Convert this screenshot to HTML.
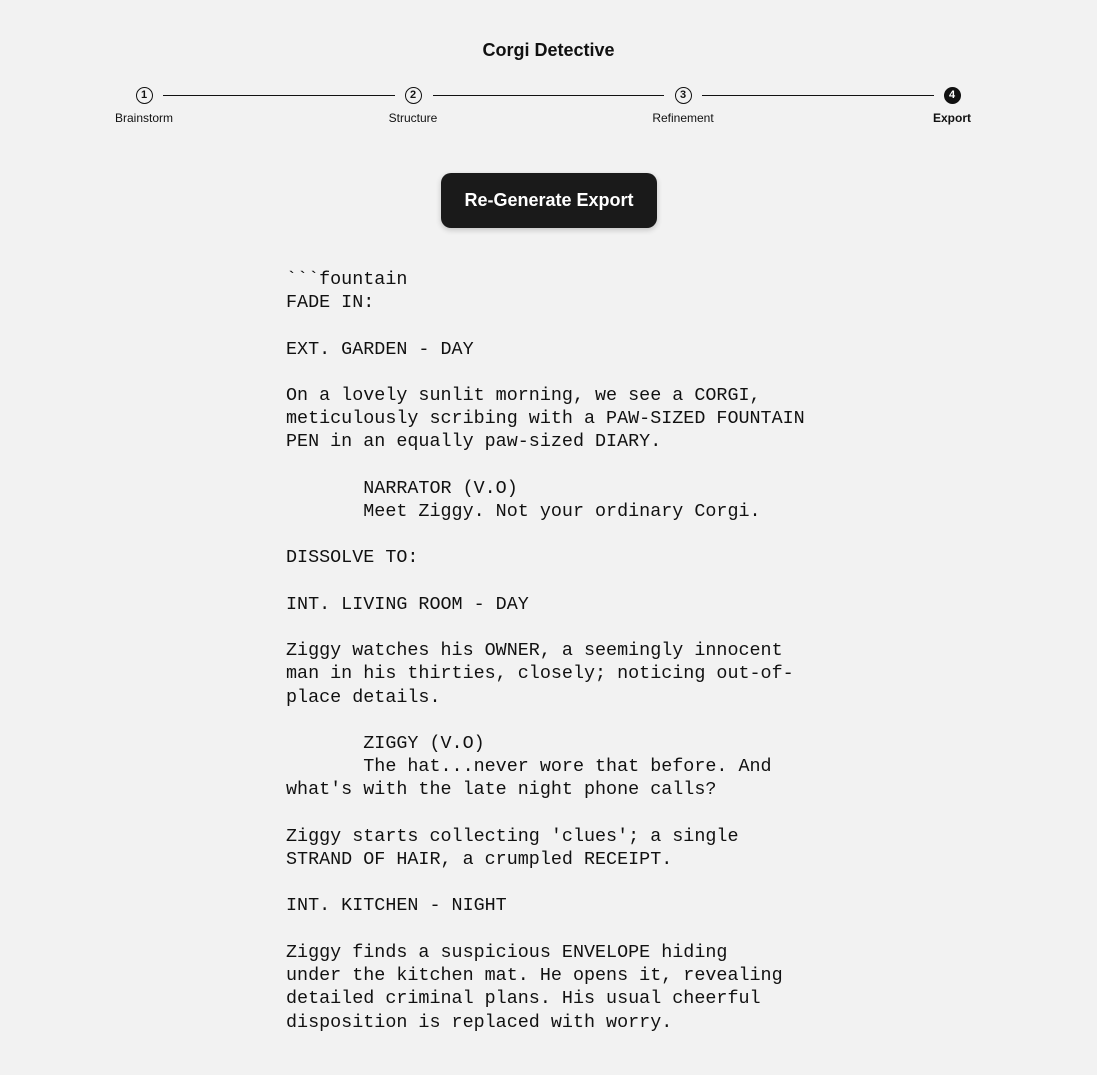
<!DOCTYPE html>
<html><head><meta charset="utf-8"><style>
html,body{margin:0;padding:0;background:#f2f2f2;width:1097px;height:1075px;overflow:hidden;font-family:"Liberation Sans",sans-serif;color:#111}
.title{position:absolute;top:40px;left:0;width:1097px;text-align:center;font-size:18px;font-weight:bold}
.step{position:absolute;top:87px;width:100px;margin-left:-50px;text-align:center}
.c{width:15px;height:15px;border:1.5px solid #111;border-radius:50%;margin:0 auto;font-size:11px;line-height:15px;font-weight:bold;box-sizing:content-box}
.c.on{background:#111;color:#fff}
.lab{font-family:"Liberation Sans Narrow","Liberation Sans",sans-serif;font-size:12px;margin-top:7px}
.line{position:absolute;top:95px;height:1.3px;background:#111}
.btn{position:absolute;left:441px;top:173px;width:216px;height:55px;background:#1a1a1a;border-radius:10px;color:#fff;font-size:18px;font-weight:bold;text-align:center;line-height:55px;box-shadow:0 2px 6px rgba(0,0,0,.2)}
.scr{position:absolute;left:286px;top:268px;margin:0;font-family:"Liberation Mono",monospace;font-size:18.4px;line-height:23.2px;color:#111;white-space:pre}
</style></head><body>
<div class="title">Corgi Detective</div>
<div class="line" style="left:163px;width:232px"></div>
<div class="line" style="left:433px;width:231px"></div>
<div class="line" style="left:702px;width:232px"></div>
<div class="step" style="left:144px"><div class="c">1</div><div class="lab">Brainstorm</div></div>
<div class="step" style="left:413px"><div class="c">2</div><div class="lab">Structure</div></div>
<div class="step" style="left:683px"><div class="c">3</div><div class="lab">Refinement</div></div>
<div class="step" style="left:952px"><div class="c on">4</div><div class="lab" style="font-weight:bold">Export</div></div>
<div class="btn">Re-Generate Export</div>
<div class="scr">&#96;&#96;&#96;fountain
FADE IN:

EXT. GARDEN - DAY

On a lovely sunlit morning, we see a CORGI,
meticulously scribing with a PAW-SIZED FOUNTAIN
PEN in an equally paw-sized DIARY.

       NARRATOR (V.O)
       Meet Ziggy. Not your ordinary Corgi.

DISSOLVE TO:

INT. LIVING ROOM - DAY

Ziggy watches his OWNER, a seemingly innocent
man in his thirties, closely; noticing out-of-
place details.

       ZIGGY (V.O)
       The hat...never wore that before. And
what's with the late night phone calls?

Ziggy starts collecting 'clues'; a single
STRAND OF HAIR, a crumpled RECEIPT.

INT. KITCHEN - NIGHT

Ziggy finds a suspicious ENVELOPE hiding
under the kitchen mat. He opens it, revealing
detailed criminal plans. His usual cheerful
disposition is replaced with worry.</div>
</body></html>
